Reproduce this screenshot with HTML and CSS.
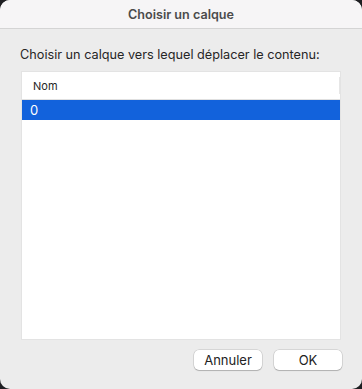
FILE: index.html
```html
<!DOCTYPE html>
<html>
  <head>
    <title>Choisir un calque</title>
    <link rel="stylesheet" href="styles.css">
  </head>
  <body>
    <div class="dialog">
      <header class="title-bar">Choisir un calque</header>
      <div class="dialog-body">
        <p class="prompt">Choisir un calque vers lequel déplacer le contenu:</p>
        <div class="layer-table">
          <div class="table-head">
            <span class="col-name">Nom</span>
            <span class="col-sep"></span>
          </div>
          <div class="table-row selected">0</div>
        </div>
        <div class="actions">
          <button class="btn">Annuler</button>
          <button class="btn">OK</button>
        </div>
      </div>
    </div>
  </body>
</html>
```

FILE: styles.css
```css
html
{
  background-color: #1e1f22;
}

body
{
  margin: 0;
  font-family: Inter, "Liberation Sans", Arial, sans-serif;
  width: 362px;
  height: 389px;
}

.dialog
{
  height: 389px;
  background-color: #ececec;
  border-radius: 10px;
  overflow: hidden;
  display: flex;
  flex-direction: column;
}

.title-bar
{
  height: 28px;
  line-height: 29px;
  background-color: #f6f5f6;
  border-bottom: 1px solid #d4d4d4;
  text-align: center;
  font-size: 12.6px;
  font-weight: 600;
  color: #4b4b4b;
  flex-shrink: 0;
}

.dialog-body
{
  flex: 1;
  display: flex;
  flex-direction: column;
  padding: 0 20px 19px 20px;
}

.prompt
{
  margin: 18px 0 8px 0;
  font-size: 12.7px;
  color: #262626;
  line-height: 16px;
}

.layer-table
{
  height: 267px;
  background-color: #fff;
  border: 1px solid #e3e3e3;
  margin: 0 1px;
}

.table-head
{
  height: 27px;
  display: flex;
  align-items: center;
  border-bottom: 1px solid #e0e0e0;
  font-size: 11px;
  color: #262626;
}

.col-name
{
  flex: 1;
  padding-left: 11px;
  padding-top: 1px;
}

.col-sep
{
  width: 1px;
  height: 17px;
  background-color: #e6e6e6;
}

.table-row
{
  height: 20px;
  line-height: 20px;
  padding-left: 8px;
  font-size: 13px;
}

.selected
{
  background-color: #1262dc;
  color: #fff;
}

.actions
{
  margin-top: auto;
  display: flex;
  justify-content: flex-end;
  gap: 12px;
}

.btn
{
  width: 68px;
  height: 20px;
  padding: 0;
  font-family: inherit;
  font-size: 13px;
  color: #222;
  background-color: #fff;
  border: none;
  border-radius: 5px;
  box-shadow: 0 0 0 0.5px rgba(0, 0, 0, 0.18), 0 1px 1px rgba(0, 0, 0, 0.18);
}
```
